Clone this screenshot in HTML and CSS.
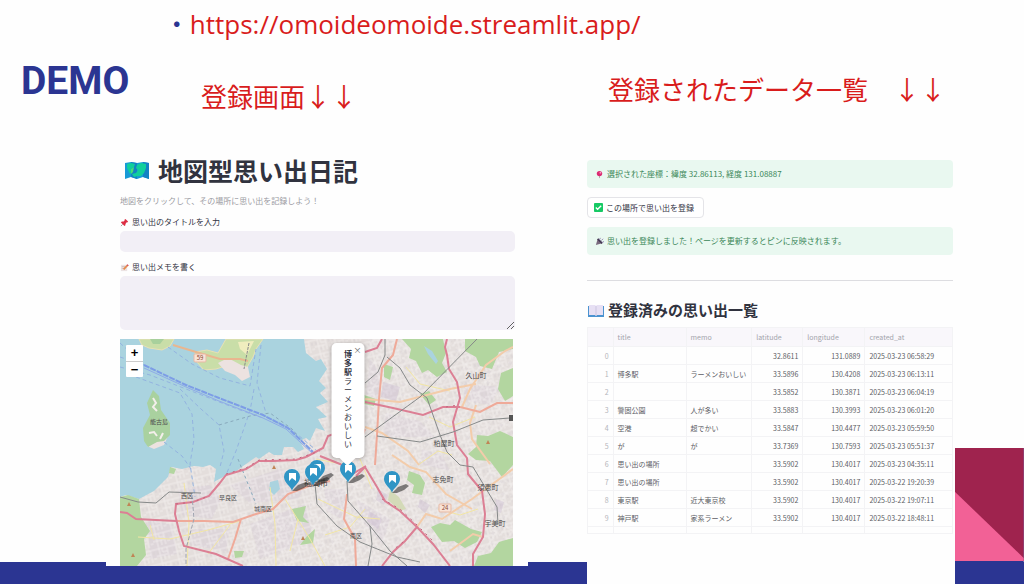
FILE: index.html
```html
<!DOCTYPE html>
<html lang="ja">
<head>
<meta charset="utf-8">
<meta name="viewport" content="width=device-width, initial-scale=1">
<title>DEMO - 地図型思い出日記</title>
<link rel="stylesheet" href="styles.css">
</head>
<body>
<div class="slide">
  <div class="band"></div>
  <svg class="corner" viewBox="0 0 69 136" preserveAspectRatio="none" aria-hidden="true">
    <rect width="69" height="136" fill="#2b3592"/>
    <rect width="69" height="113" fill="#9f234e"/>
    <path d="M0 41 69 110V113H0Z" fill="#f26196"/>
  </svg>

  <header class="head">
    <p class="link-line"><span class="dot">・</span><a href="https://omoideomoide.streamlit.app/">https://omoideomoide.streamlit.app/</a></p>
    <div class="titles">
      <h1 class="demo">DEMO</h1>
      <p class="caption caption-left">登録画面↓↓</p>
      <p class="caption caption-right">登録されたデータ一覧　↓↓</p>
    </div>
  </header>

  <main class="panels">
    <section class="panel entry">
      <h2 class="app-title">
        <svg class="map-icon" viewBox="0 0 24 20" aria-hidden="true">
          <path d="M0 3 6 2 12 3 18 2 24 3V19L18 17 12 19 6 17 0 19Z" fill="#179ad6"/>
          <path d="M6 2 12 3V19L6 17ZM18 2 24 3V19L18 17Z" fill="#1382c4"/>
          <path d="M2 4 6 3 10 4 9 7 6 9 7 12 5 14 3 10 2 8ZM12 5 16 3 21 4 21 8 19 13 16 16 13 16 9 17 7 14 11 13 13 10 11 8Z" fill="#10cf9b"/>
          <path d="M6 9 9 7 8 12 6 14Z" fill="#48dd76"/>
        </svg>
        地図型思い出日記
      </h2>
      <p class="lead">地図をクリックして、その場所に思い出を記録しよう！</p>
      <label class="label" for="title">
        <svg class="mini" viewBox="0 0 10 10" aria-hidden="true"><path d="M6 1 9 4 8 5 7 5 6 7 6 8 5 9 1 5 2 4 4 4 5 3 5 2Z" fill="#dd2e44"/><path d="M3 7 1 9" stroke="#999"/></svg>思い出のタイトルを入力</label>
      <input class="field" id="title" type="text">
      <label class="label" for="memo">
        <svg class="mini" viewBox="0 0 10 10" aria-hidden="true"><path d="M1 2H8V9H1Z" fill="#ece3e3"/><path d="M2 4H6M2 6H4" stroke="#cbb"/><path d="M4 7 8 3" stroke="#e58a4c" stroke-width="2"/><path d="M8 3 9 2" stroke="#d33a4a" stroke-width="2"/></svg>思い出メモを書く</label>
      <textarea class="field memo" id="memo"></textarea>

      <div class="map">
        <svg class="map-art" viewBox="0 0 393 227" preserveAspectRatio="xMidYMid slice" role="img" aria-label="福岡市周辺の地図">
          <defs>
            <pattern id="streets" width="17" height="15" patternUnits="userSpaceOnUse" patternTransform="rotate(-14)">
              <path d="M0 3H17M0 10H11M4 0V15M12 3V15M8 10V15M14 12H17M7 3V7H12" stroke="#f8f5f4" fill="none"/>
              <path d="M1 5H3V8H1ZM14 5H16V8H14ZM5 12H7V14H5Z" fill="#dad4d5"/>
            </pattern>
            <pattern id="lanes" width="13" height="19" patternUnits="userSpaceOnUse" patternTransform="rotate(33)">
              <path d="M0 4H13M0 14H8M5 0V19M10 4V14" stroke="#f6f3f2" fill="none"/>
              <path d="M6 6H9V8H6ZM1 15H4V18H1Z" fill="#ddd7da"/>
            </pattern>
            <g id="pin">
              <path d="M0 14 6 8 14 5 17 7 12 11 5 14Z" fill="#222" opacity=".55"/>
              <path d="M0 14C-1 9-8 6-8 0A8 8 0 0 1 8 0C8 6 1 9 0 14Z" fill="#3095c5"/>
              <path d="M-3-4H4V4L0 1-3 4Z" fill="#fff"/>
            </g>
            <path id="land" d="M0 158 6 156 19 160 34 152 48 138 51 128 62 130 74 127 83 128 90 126 96 130 94 143 103 138 115 133 126 125 136 118 139 120 149 113 154 116 162 116 164 108 173 108 178 113 184 110 180 102 186 99 190 102 196 89 205 92 198 80 207 78 196 68 208 63 200 54 206 49 199 42 207 30 201 20 196 22 186 14 184 0H393V227H0Z"/>
          </defs>
          <rect width="393" height="227" fill="#aad3df"/>
          <use href="#land" fill="#e4dedc"/>

          <g fill="#dcd3d8" opacity=".7">
            <path d="M58 150 90 146 101 160 92 180 62 176ZM110 146 160 130 190 140 178 160 130 164ZM28 180 52 186 57 215 30 220ZM72 190 110 190 106 212 70 206ZM130 185 185 165 194 200 140 220ZM204 150 225 150 225 182 207 172ZM236 160 270 180 262 205 244 184ZM250 20 262 36 258 60 246 55ZM266 74 300 82 315 98 262 98ZM344 45 380 48 370 66 344 62ZM302 110 322 116 330 132 300 125Z"/>
          </g>
          <use href="#land" fill="url(#streets)" opacity=".6"/>
          <path d="M190 130H393V227H190ZM245 0H393V125H245ZM120 175H180V227H120Z" fill="url(#lanes)" opacity=".5"/>

          <g fill="#b3d6a0">
            <path d="M0 158 8 156 19 160 21 178 30 192 24 200 26 216 17 227H0Z"/>
            <path d="M282 0 323 0 326 14 322 24 327 33 317 38 308 31 302 34 296 22 289 19 291 10Z"/>
            <path d="M345 0 393 0V10L379 13 372 30 360 27 356 18 345 12Z"/>
            <path d="M381 34 393 29V57L385 62 378 50Z"/>
            <path d="M357 96 368 97 380 92 393 98V126L382 138 370 122 356 121 348 115 356 108Z"/>
            <path d="M300 55 309 52 316 61 309 66ZM244 56 256 60 254 67 244 65ZM264 25 273 28 270 41 264 38Z"/>
            <path d="M289 132 300 136 305 144 302 156 292 154 294 146 287 141Z"/>
            <path d="M311 188 320 184 330 186 335 181 351 190 362 193 357 203 345 209 334 202 322 203Z"/>
            <path d="M371 214 379 203 393 199V227H354L358 217Z"/>
            <path d="M172 170 186 167 183 178 189 184 177 182ZM114 212 124 212 122 218 115 219ZM187 197 195 190 193 204 180 206ZM50 128 56 130 54 135 49 134Z"/>
            <path d="M270 151 279 158 286 170 280 172 268 161Z" fill="#d4dab8"/>
          </g>
          <g fill="#aad3df">
            <path d="M150 143 158 141 160 150 154 156 149 151Z"/>
            <path d="M304 7 312 12 318 22 316 25 308 15Z"/>
          </g>
          <g fill="#c5b4cf" opacity=".35">
            <path d="M258 150 268 156 264 166 256 161ZM249 172 262 180 258 190 247 182ZM263 43 280 48 276 62 261 58ZM376 160 384 163 381 174 374 171ZM300 160 310 166 305 174 298 168Z"/>
          </g>

          <g fill="#c9dea8" stroke="#e8e0b4">
            <path d="M19 0H54L50 7 42 11 29 9 22 6Z"/>
            <path d="M106 0H143L136 10 133 18 126 30 112 25 96 30 84 31 76 22 75 13 87 11 98 14Z"/>
          </g>
          <path d="M30 0H44L40 5H33Z" fill="#a8d09c"/>
          <path d="M118 3 134 2 127 16 120 10Z" fill="#f0edbe"/>
          <path d="M98 24 108 19 121 26 128 28 130 38 122 42 115 36 105 32ZM30 103 38 100 48 97 44 106 34 110 27 107Z" fill="#ece2e0"/>
          <path d="M33 51 39 57 41 71 50 84 50 96 44 102 37 103 28 108 24 102 23 89 30 76 27 64Z" fill="#a9d19f"/>
          <path d="M33 59 36 64 33 68 37 72M29 94 34 93 37 97M43 94 40 100" stroke="#f4efeb" stroke-width="2" fill="none"/>

          <g fill="none" stroke="#93b3e0" stroke-dasharray="4 3">
            <path d="M0 4 24 26M0 18 24 26M0 28 30 36 66 50 120 71 143 79M16 38 60 54 72 75 74 100 70 125 75 158"/>
            <path d="M48 8 72 25 100 39 130 47 136 10M141 6 137 44 146 74M134 50 130 72 116 112 106 136M44 103 62 117 71 130"/>
            <path d="M60 50 81 70 99 86 104 112 100 128M143 76 172 91 196 111"/>
          </g>
          <path d="M99 86 130 77 150 74 172 90 184 105M118 120 136 165" fill="none" stroke="#88a9bc" stroke-dasharray="3 3"/>
          <path d="M24 26 66 46 99 59 143 76 168 89 193 113" fill="none" stroke="#7d9de6" stroke-width="2" stroke-dasharray="6 1"/>
          <path d="M24 29 66 48 99 62 143 79 166 90 193 115" fill="none" stroke="#8eaae8"/>

          <g fill="none" stroke="#f2e6a4">
            <path d="M64 144 69 184 67 227M150 148 155 185 156 227M18 198 50 200 88 191 120 182M88 215 110 186M30 186 34 201M165 160 190 200 205 227M198 160 236 178 260 180M205 196 230 188 245 170M170 212 178 180M196 120 226 126M286 28 300 45 330 52M309 78 330 88 355 78M298 126 318 112 332 116M318 170 340 176 358 170M240 120 252 150"/>
          </g>
          <g fill="none" stroke="#f3ccaa" stroke-width="2">
            <path d="M342 68 350 50 366 26 385 12 393 8M245 60 280 63 330 50 356 45M356 66 350 84 352 100 370 125M245 88 262 94 288 112 299 126M272 116 290 128 306 133 326 155 352 170M297 188 306 175 322 180 352 160 393 130M330 212 353 195 363 198"/>
          </g>
          <g fill="none" stroke="#efaa99" stroke-width="2">
            <path d="M277 0 273 16 262 29 259 60 257 96 255 126M56 182 84 182 113 183 136 175 153 170 168 155 189 147 210 142M121 180 115 200 108 220M227 155 224 180 235 200 236 227M340 68 360 73 377 64 393 64M245 90 236 112 228 130"/>
          </g>
          <path d="M53 6 76 13 100 20 120 20 128 22" fill="none" stroke="#e9b68f" stroke-width="2"/>
          <g fill="none" stroke="#dc7f94" stroke-width="2">
            <path d="M186 118 176 121 153 122 139 122 126 130 106 136 99 145 89 157 73 163 56 165 55 175 59 192 64 207 96 215 123 227"/>
            <path d="M0 173 7 174 16 180 56 182M327 0 325 8 327 16 329 30 337 43 340 59 333 83 337 106 347 119 348 135 362 152 365 175 363 198 353 215 353 227"/>
            <path d="M245 63 273 69 303 76 323 68 340 68M245 13 257 9 262 0M186 118 203 109 208 97 214 95M200 117 220 125 234 134 246 127"/>
            <path d="M236 137 245 128 257 148 265 162 280 172 297 188 313 205 330 227M297 188 285 202 273 213 262 227"/>
          </g>
          <g fill="none" stroke="#c4647d" stroke-dasharray="2 5">
            <path d="M56 165 73 163 89 157M106 135 126 129 139 121 176 120 200 112M262 160 280 170 297 186 315 204M283 203 273 211M326 68 338 66"/>
          </g>
          <g fill="none" stroke="#868989">
            <path d="M357 0 300 58 245 98M265 0 265 16 258 33 245 44M267 18 280 29 290 46 307 59 320 96 327 113 340 126 353 128 377 168 378 185"/>
            <path d="M257 97 300 103 333 93 363 81 390 79M195 145 197 165 217 187 240 203 277 218 300 223M227 142 228 162 250 187 252 205 248 227M250 187 270 212 287 227M0 158 18 163 36 164 49 153 81 154"/>
            <path d="M129 4 124 30" stroke-dasharray="3 1"/>
          </g>
          <path d="M72 156 74 180 66 210 66 227" fill="none" stroke="#9ea3af" stroke-dasharray="4 2"/>
          <path d="M389 76H393V82H389Z" fill="#555"/>
          <g fill="#c08455"><path d="M7 167 9 163 11 167ZM11 218 13 214 15 218ZM152 130 154 126 156 130ZM366 105 368 101 370 105ZM181 201 183 197 185 201Z"/></g>

          <g class="map-label">
            <text class="small" x="39" y="85">能古島</text>
            <text class="small" x="67" y="159">西区</text>
            <text class="small" x="108" y="161">早良区</text>
            <text class="small" x="143" y="172">城南区</text>
            <text class="small" x="236" y="199">南区</text>
            <text class="city" x="196" y="147">福岡市</text>
            <text x="356" y="39">久山町</text>
            <text x="324" y="107">粕屋町</text>
            <text x="323" y="143">志免町</text>
            <text x="368" y="151">須恵町</text>
            <text x="375" y="187">宇美町</text>
          </g>
          <g class="route">
            <rect x="74" y="15" width="12" height="8" rx="1"/><text x="80" y="21">59</text>
            <rect x="319" y="165" width="12" height="8" rx="1"/><text x="325" y="171">24</text>
          </g>
          <use href="#pin" x="172" y="138"/>
          <use href="#pin" x="197" y="129"/>
          <use href="#pin" x="193" y="133"/>
          <use href="#pin" x="228" y="130"/>
          <use href="#pin" x="272" y="140"/>
        </svg>
        <div class="zoom">
          <button type="button" aria-label="拡大">+</button>
          <button type="button" aria-label="縮小">−</button>
        </div>
        <div class="popup">
          <button class="popup-close" type="button" aria-label="閉じる">×</button>
          <p class="popup-text"><b>博多駅</b>ラーメンおいしい</p>
        </div>
      </div>
    </section>

    <section class="panel records">
      <p class="notice"><svg class="mini" viewBox="0 0 10 10" aria-hidden="true"><path d="M5 5V9" stroke="#aaa"/><circle cx="5" cy="4" r="3" fill="#dc2a72"/><circle cx="6" cy="3" r="1" fill="#f7a0c4"/></svg>選択された座標：緯度 32.86113, 経度 131.08887</p>
      <button class="save" type="button"><svg class="mini" viewBox="0 0 10 10" aria-hidden="true"><rect width="10" height="10" rx="1" fill="#17c964"/><path d="M2 5 4 7 8 3" fill="none" stroke="#fff" stroke-width="1.5"/></svg>この場所で思い出を登録</button>
      <p class="notice"><svg class="mini" viewBox="0 0 10 10" aria-hidden="true"><path d="M1 9 3 2 8 7Z" fill="#796a7e"/><path d="M3 2 8 7" stroke="#453a55" stroke-width="2"/><path d="M5 3 6 1M7 4 9 2M8 6 10 5" stroke="#8f7fae"/></svg>思い出を登録しました！ページを更新するとピンに反映されます。</p>
      <hr class="rule">
      <h2 class="list-title">
        <svg class="book" viewBox="0 0 16 14" aria-hidden="true">
          <path d="M0 3H16V14H0Z" fill="#4b93d0"/>
          <path d="M1 2H7L8 3 9 2H15V12H9L8 13 7 12H1Z" fill="#e7e0f4"/>
          <path d="M8 3V13" stroke="#cbc5e0"/>
        </svg>登録済みの思い出一覧</h2>
      <table class="grid">
        <colgroup><col class="c-index"><col class="c-title"><col class="c-memo"><col class="c-lat"><col class="c-lng"><col class="c-date"></colgroup>
        <thead><tr><th></th><th>title</th><th>memo</th><th>latitude</th><th>longitude</th><th>created_at</th></tr></thead>
        <tbody>
          <tr><td>0</td><td></td><td></td><td>32.8611</td><td>131.0889</td><td>2025-03-23 06:58:29</td></tr>
          <tr><td>1</td><td>博多駅</td><td>ラーメンおいしい</td><td>33.5896</td><td>130.4208</td><td>2025-03-23 06:13:11</td></tr>
          <tr><td>2</td><td></td><td></td><td>33.5852</td><td>130.3871</td><td>2025-03-23 06:04:19</td></tr>
          <tr><td>3</td><td>警固公園</td><td>人が多い</td><td>33.5883</td><td>130.3993</td><td>2025-03-23 06:01:20</td></tr>
          <tr><td>4</td><td>空港</td><td>超でかい</td><td>33.5847</td><td>130.4477</td><td>2025-03-23 05:59:50</td></tr>
          <tr><td>5</td><td>が</td><td>が</td><td>33.7369</td><td>130.7593</td><td>2025-03-23 05:51:37</td></tr>
          <tr><td>6</td><td>思い出の場所</td><td></td><td>33.5902</td><td>130.4017</td><td>2025-03-23 04:35:11</td></tr>
          <tr><td>7</td><td>思い出の場所</td><td></td><td>33.5902</td><td>130.4017</td><td>2025-03-22 19:20:39</td></tr>
          <tr><td>8</td><td>東京駅</td><td>近大東京校</td><td>33.5902</td><td>130.4017</td><td>2025-03-22 19:07:11</td></tr>
          <tr><td>9</td><td>神戸駅</td><td>家系ラーメン</td><td>33.5902</td><td>130.4017</td><td>2025-03-22 18:48:11</td></tr>
          <tr class="stub"><td></td><td></td><td></td><td></td><td></td><td></td></tr>
        </tbody>
      </table>
    </section>
  </main>
</div>
</body>
</html>
```
FILE: styles.css
```css
* { box-sizing: border-box; }

body {
  margin: 0;
  background: #fefefe;
  color: #31333f;
  font-family: "Noto Sans CJK JP", sans-serif;
}

h1, h2, p { margin: 0; }

button { font: inherit; color: inherit; padding: 0; cursor: pointer; }

.slide {
  position: relative;
  display: flex;
  flex-direction: column;
  min-height: 100vh;
}

/* Decorations that the panels lie over */
.band {
  position: absolute;
  inset: auto 0 0 0;
  height: 22px;
  background: #2b3592;
}

.corner {
  position: absolute;
  right: 0;
  bottom: 0;
  width: 7%;
  height: 136px;
}

.head { min-height: 150px; padding-top: 6px; }

.link-line {
  display: flex;
  padding-left: 16%;
  font-family: "Open Sans", "Noto Sans CJK JP", sans-serif;
  font-size: 26px;
  line-height: 36px;
}

.link-line a { color: #d91c1c; text-decoration: none; }

.dot { color: #2b3592; }

.titles {
  display: grid;
  grid-template-columns: 201fr 407fr 416fr;
  align-items: start;
}

.demo {
  padding: 15px 0 0 21px;
  color: #2b3592;
  font-family: Roboto, sans-serif;
  font-size: 39px;
  line-height: 48px;
}

.caption {
  color: #d91c1c;
  font-size: 26px;
  line-height: 36px;
  white-space: nowrap;
}

.caption-left { padding-top: 36px; }
.caption-right { padding-top: 29px; }

.panels {
  position: relative;
  flex: 1;
  display: grid;
  grid-template-columns: 106fr 422fr 59fr 368fr 69fr;
}

.panel {
  display: flex;
  flex-direction: column;
  min-width: 0;
  background: #fefefe;
}

.entry { grid-column: 2; margin-bottom: 18px; padding: 4px 13px 0 14px; }
.records { grid-column: 4; padding: 10px 2px 0 0; }

.app-title {
  display: flex;
  align-items: center;
  gap: 9px;
  padding-left: 5px;
  font-size: 25px;
  line-height: 32px;
}

.map-icon { width: 24px; height: 20px; }

.lead {
  margin-top: 9px;
  color: #9b9ba2;
  font-size: 8px;
  line-height: 12px;
}

.label {
  display: flex;
  align-items: center;
  gap: 3px;
  margin-top: 9px;
  font-size: 8px;
  line-height: 12px;
}

.mini { flex: none; width: 9px; height: 9px; }

.field {
  width: 100%;
  height: 21px;
  margin-top: 3px;
  padding: 4px 8px;
  border: 0;
  border-radius: 5px;
  background: #f2eff6;
  font: inherit;
  font-size: 8px;
}

.memo { display: block; height: 54px; resize: vertical; }

.map {
  position: relative;
  flex: 1;
  min-height: 227px;
  margin: 9px 2px 0 0;
  overflow: hidden;
}

.map-art { position: absolute; inset: 0; width: 100%; height: 100%; }

.map-label {
  fill: #4c4c4c;
  font-size: 7px;
  text-anchor: middle;
}

.map-label .small { font-size: 6px; }
.map-label .city { font-size: 8px; }

.route rect { fill: #f8e3d6; stroke: #e8b9a5; }
.route text { fill: #8d4a35; font-size: 6px; text-anchor: middle; }

.zoom {
  position: absolute;
  top: 6px;
  left: 6px;
  display: grid;
  width: 17px;
  border-radius: 1px;
  background: #fff;
}

.zoom button {
  height: 16px;
  border: 0;
  background: none;
  color: #000;
  font-family: "Liberation Sans", sans-serif;
  font-size: 13px;
  font-weight: 700;
  line-height: 14px;
}

.zoom button + button { border-top: 1px solid #ccc; }

.popup {
  position: absolute;
  top: 4px;
  left: 58%;
  width: 33px;
  height: 115px;
  padding-top: 6px;
  border-radius: 5px;
  background: #fff;
  box-shadow: 0 1px 4px #0004;
  transform: translateX(-50%);
}

.popup::after {
  content: "";
  position: absolute;
  top: 100%;
  left: 50%;
  border: 8px solid transparent;
  border-top-color: #fff;
  border-bottom-width: 0;
  transform: translateX(-50%);
}

.popup-close {
  position: absolute;
  top: 2px;
  right: 3px;
  border: 0;
  background: none;
  color: #666;
  font-size: 8px;
  line-height: 10px;
}

.popup-text {
  width: 8px;
  margin: 0 auto;
  font-size: 8px;
  line-height: 9px;
  line-break: anywhere;
  word-break: break-all;
}

.notice {
  display: flex;
  align-items: center;
  gap: 3px;
  height: 28px;
  padding-left: 8px;
  border-radius: 4px;
  background: #e9f8f0;
  color: #3a8758;
  font-size: 8px;
  line-height: 12px;
}

.save {
  display: flex;
  align-items: center;
  align-self: flex-start;
  gap: 3px;
  height: 21px;
  margin: 9px 0;
  padding: 0 9px 0 6px;
  border: 1px solid #e4e4e8;
  border-radius: 4px;
  background: #fff;
  font-size: 8px;
}

.rule {
  width: 100%;
  margin: 25px 0 17px;
  border: 0;
  border-top: 1px solid #dddde1;
}

.list-title {
  display: flex;
  align-items: center;
  gap: 4px;
  padding-left: 1px;
  font-size: 15px;
  line-height: 24px;
}

.book { width: 16px; height: 14px; }

.grid {
  width: 100%;
  margin-top: 5px;
  border: 1px solid #f3f3f5;
  border-collapse: collapse;
  table-layout: fixed;
  color: #5c5d65;
  font-size: 7px;
  line-height: 12px;
}

.c-index { width: 7%; }
.c-title { width: 20%; }
.c-memo { width: 18%; }
.c-lat { width: 14%; }
.c-lng { width: 17%; }
.c-date { width: 24%; }

.grid th, .grid td {
  height: 18px;
  padding: 0 4px;
  border: 1px solid #f3f3f5;
  text-align: left;
  white-space: nowrap;
}

.grid th {
  height: 19px;
  background: #f9f7fb;
  color: #a3a4ab;
  font-weight: 400;
}

.grid td:first-child { color: #b4b5ba; text-align: right; }
.grid td:nth-child(4), .grid td:nth-child(5) { text-align: right; }
.grid .stub td { height: 7px; }
```
